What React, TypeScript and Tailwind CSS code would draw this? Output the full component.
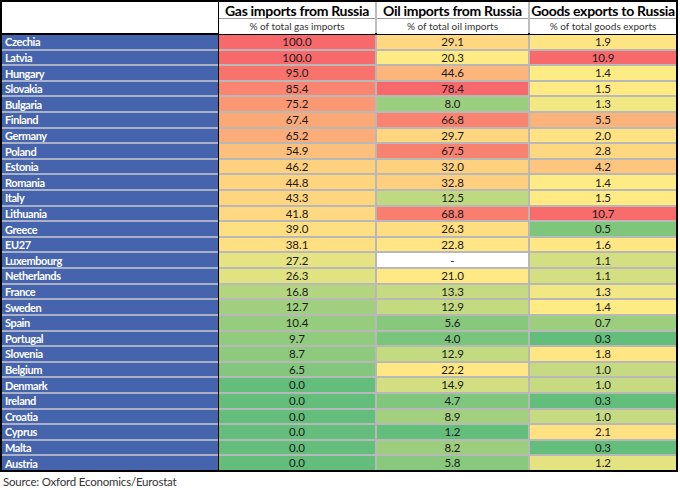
import React from "react";

type Row = [string, number, number | null, number];

const rows: Row[] = [
  ["Czechia", 100.0, 29.1, 1.9],
  ["Latvia", 100.0, 20.3, 10.9],
  ["Hungary", 95.0, 44.6, 1.4],
  ["Slovakia", 85.4, 78.4, 1.5],
  ["Bulgaria", 75.2, 8.0, 1.3],
  ["Finland", 67.4, 66.8, 5.5],
  ["Germany", 65.2, 29.7, 2.0],
  ["Poland", 54.9, 67.5, 2.8],
  ["Estonia", 46.2, 32.0, 4.2],
  ["Romania", 44.8, 32.8, 1.4],
  ["Italy", 43.3, 12.5, 1.5],
  ["Lithuania", 41.8, 68.8, 10.7],
  ["Greece", 39.0, 26.3, 0.5],
  ["EU27", 38.1, 22.8, 1.6],
  ["Luxembourg", 27.2, null, 1.1],
  ["Netherlands", 26.3, 21.0, 1.1],
  ["France", 16.8, 13.3, 1.3],
  ["Sweden", 12.7, 12.9, 1.4],
  ["Spain", 10.4, 5.6, 0.7],
  ["Portugal", 9.7, 4.0, 0.3],
  ["Slovenia", 8.7, 12.9, 1.8],
  ["Belgium", 6.5, 22.2, 1.0],
  ["Denmark", 0.0, 14.9, 1.0],
  ["Ireland", 0.0, 4.7, 0.3],
  ["Croatia", 0.0, 8.9, 1.0],
  ["Cyprus", 0.0, 1.2, 2.1],
  ["Malta", 0.0, 8.2, 0.3],
  ["Austria", 0.0, 5.8, 1.2],
];

const GREEN = [0x63, 0xbe, 0x7b];
const YELLOW = [0xff, 0xeb, 0x84];
const RED = [0xf8, 0x69, 0x6b];

// excel-style percentile (inclusive)
function median(values: number[]) {
  const s = [...values].sort((a, b) => a - b);
  const r = 0.5 * (s.length - 1);
  const lo = Math.floor(r);
  return s[lo] + (s[Math.min(lo + 1, s.length - 1)] - s[lo]) * (r - lo);
}

function mix(a: number[], b: number[], t: number) {
  const c = a.map((x, i) => Math.round(x + (b[i] - x) * t));
  return `rgb(${c[0]}, ${c[1]}, ${c[2]})`;
}

function makeScale(values: number[]) {
  const min = Math.min(...values);
  const max = Math.max(...values);
  const mid = median(values);
  return (v: number) =>
    v <= mid
      ? mix(GREEN, YELLOW, mid === min ? 1 : (v - min) / (mid - min))
      : mix(YELLOW, RED, (v - mid) / (max - mid));
}

const gasColor = makeScale(rows.map((r) => r[1]));
const oilColor = makeScale(rows.filter((r) => r[2] !== null).map((r) => r[2] as number));
const goodsColor = makeScale(rows.map((r) => r[3]));

const headers = [
  ["Gas imports from Russia", "% of total gas imports"],
  ["Oil imports from Russia", "% of total oil imports"],
  ["Goods exports to Russia", "% of total goods exports"],
];

const ValueCell = ({ value, color }: { value: number | null; color: string }) => (
  <div
    className="flex items-center justify-center text-[11.5px] leading-none text-[#1a1a1a]"
    style={{ backgroundColor: value === null ? "#ffffff" : color }}
  >
    {value === null ? "-" : value.toFixed(1)}
  </div>
);

export default function App() {
  return (
    <div className="w-[680px] h-[490px] bg-white font-['Lato',sans-serif]">
      <div className="w-[678px] border-2 border-black">
        {/* header */}
        <div className="flex h-[33px] border-b-2 border-black">
          <div className="w-[217px] border-r border-black bg-white" />
          <div className="grid flex-1 grid-cols-[156px_151px_1fr] gap-x-[2px] bg-[#bdbdbd]">
            {headers.map(([title, sub]) => (
              <div key={title} className="flex flex-col bg-white">
                <div className="flex h-[17px] items-center justify-center border-b border-[#9a9a9a] text-[14px] font-bold tracking-[-0.3px] text-black">
                  {title}
                </div>
                <div className="flex flex-1 items-center justify-center text-[10px] text-[#333]">
                  {sub}
                </div>
              </div>
            ))}
          </div>
        </div>

        {/* body */}
        <div className="flex h-[435px]">
          <div className="grid w-[217px] grid-rows-[repeat(28,1fr)] gap-y-[2px] border-r border-black bg-[#a9b1c6]">
            {rows.map(([name]) => (
              <div
                key={name}
                className="flex items-center bg-[#4564ad] pl-[3px] text-[11px] font-bold leading-none tracking-[-0.4px] text-white"
              >
                {name}
              </div>
            ))}
          </div>
          <div className="grid flex-1 grid-cols-[156px_151px_1fr] grid-rows-[repeat(28,1fr)] gap-[2px] bg-[#b8b8b8]">
            {rows.map(([name, gas, oil, goods]) => (
              <React.Fragment key={name}>
                <ValueCell value={gas} color={gasColor(gas)} />
                <ValueCell value={oil} color={oil === null ? "#fff" : oilColor(oil)} />
                <ValueCell value={goods} color={goodsColor(goods)} />
              </React.Fragment>
            ))}
          </div>
        </div>
      </div>
      <div className="pl-[3px] pt-[4px] text-[11.5px] leading-none tracking-[-0.2px] text-[#333]">
        Source: Oxford Economics/Eurostat
      </div>
    </div>
  );
}
